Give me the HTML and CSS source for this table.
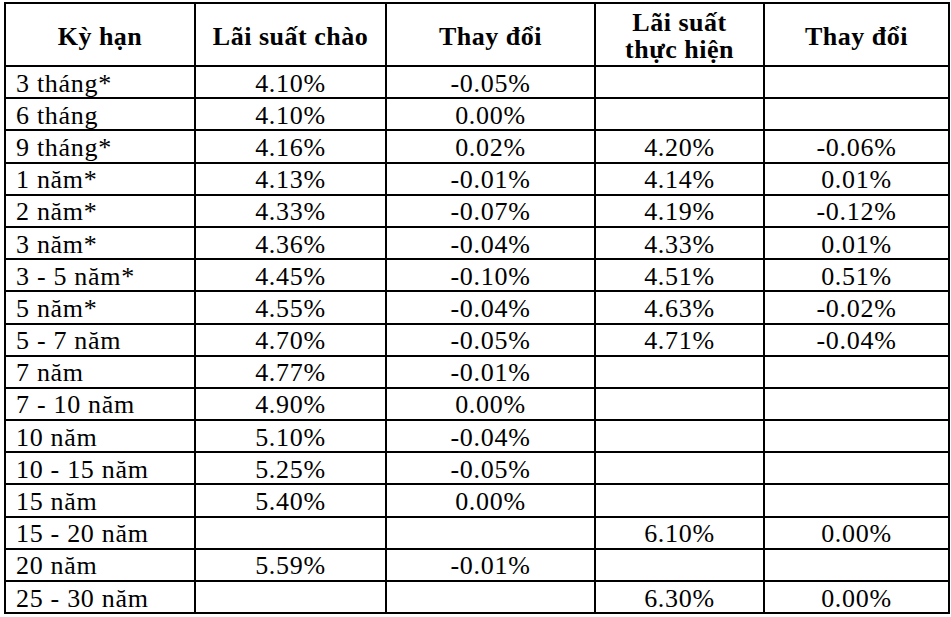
FILE: index.html
```html
<!DOCTYPE html>
<html lang="vi">
<head>
<meta charset="utf-8">
<title>Lãi suất</title>
<link rel="stylesheet" href="styles.css">
</head>
<body>
<table class="rates">
  <colgroup>
    <col class="c1"><col class="c2"><col class="c3"><col class="c4"><col class="c5">
  </colgroup>
  <thead>
    <tr class="head">
      <th>Kỳ hạn</th>
      <th>Lãi suất chào</th>
      <th>Thay đổi</th>
      <th>Lãi suất<br>thực hiện</th>
      <th>Thay đổi</th>
    </tr>
  </thead>
  <tbody>
    <tr><td class="term">3 tháng*</td><td>4.10%</td><td>-0.05%</td><td></td><td></td></tr>
    <tr><td class="term">6 tháng</td><td>4.10%</td><td>0.00%</td><td></td><td></td></tr>
    <tr><td class="term">9 tháng*</td><td>4.16%</td><td>0.02%</td><td>4.20%</td><td>-0.06%</td></tr>
    <tr><td class="term">1 năm*</td><td>4.13%</td><td>-0.01%</td><td>4.14%</td><td>0.01%</td></tr>
    <tr><td class="term">2 năm*</td><td>4.33%</td><td>-0.07%</td><td>4.19%</td><td>-0.12%</td></tr>
    <tr><td class="term">3 năm*</td><td>4.36%</td><td>-0.04%</td><td>4.33%</td><td>0.01%</td></tr>
    <tr><td class="term">3 - 5 năm*</td><td>4.45%</td><td>-0.10%</td><td>4.51%</td><td>0.51%</td></tr>
    <tr><td class="term">5 năm*</td><td>4.55%</td><td>-0.04%</td><td>4.63%</td><td>-0.02%</td></tr>
    <tr><td class="term">5 - 7 năm</td><td>4.70%</td><td>-0.05%</td><td>4.71%</td><td>-0.04%</td></tr>
    <tr><td class="term">7 năm</td><td>4.77%</td><td>-0.01%</td><td></td><td></td></tr>
    <tr><td class="term">7 - 10 năm</td><td>4.90%</td><td>0.00%</td><td></td><td></td></tr>
    <tr><td class="term">10 năm</td><td>5.10%</td><td>-0.04%</td><td></td><td></td></tr>
    <tr><td class="term">10 - 15 năm</td><td>5.25%</td><td>-0.05%</td><td></td><td></td></tr>
    <tr><td class="term">15 năm</td><td>5.40%</td><td>0.00%</td><td></td><td></td></tr>
    <tr><td class="term">15 - 20 năm</td><td></td><td></td><td>6.10%</td><td>0.00%</td></tr>
    <tr><td class="term">20 năm</td><td>5.59%</td><td>-0.01%</td><td></td><td></td></tr>
    <tr><td class="term">25 - 30 năm</td><td></td><td></td><td>6.30%</td><td>0.00%</td></tr>
  </tbody>
</table>
</body>
</html>
```

FILE: styles.css
```css
html, body {
  margin: 0;
  padding: 0;
  background: #ffffff;
}

body {
  padding: 2px 0 0 4px;
  font-family: "Liberation Serif", "Times New Roman", serif;
  color: #000000;
}

.rates {
  border-collapse: collapse;
  table-layout: fixed;
  width: 944px;
  font-size: 26px;
  letter-spacing: 0.7px;
}

.c1 { width: 190px; }
.c2 { width: 191px; }
.c3 { width: 209px; }
.c4 { width: 169px; }
.c5 { width: 185px; }

.rates th,
.rates td {
  border: 2px solid #000000;
  padding: 0 8px;
  text-align: center;
  vertical-align: middle;
  white-space: nowrap;
}

.rates th {
  font-weight: bold;
  line-height: 27px;
  letter-spacing: 0.5px;
  padding-top: 3px;
}

.head {
  height: 63px;
}

.rates tbody tr {
  height: 32.2px;
}

.rates td {
  line-height: 26px;
  padding-top: 3px;
  padding-bottom: 0;
}

.rates td.term {
  text-align: left;
  padding-left: 10px;
}
```
